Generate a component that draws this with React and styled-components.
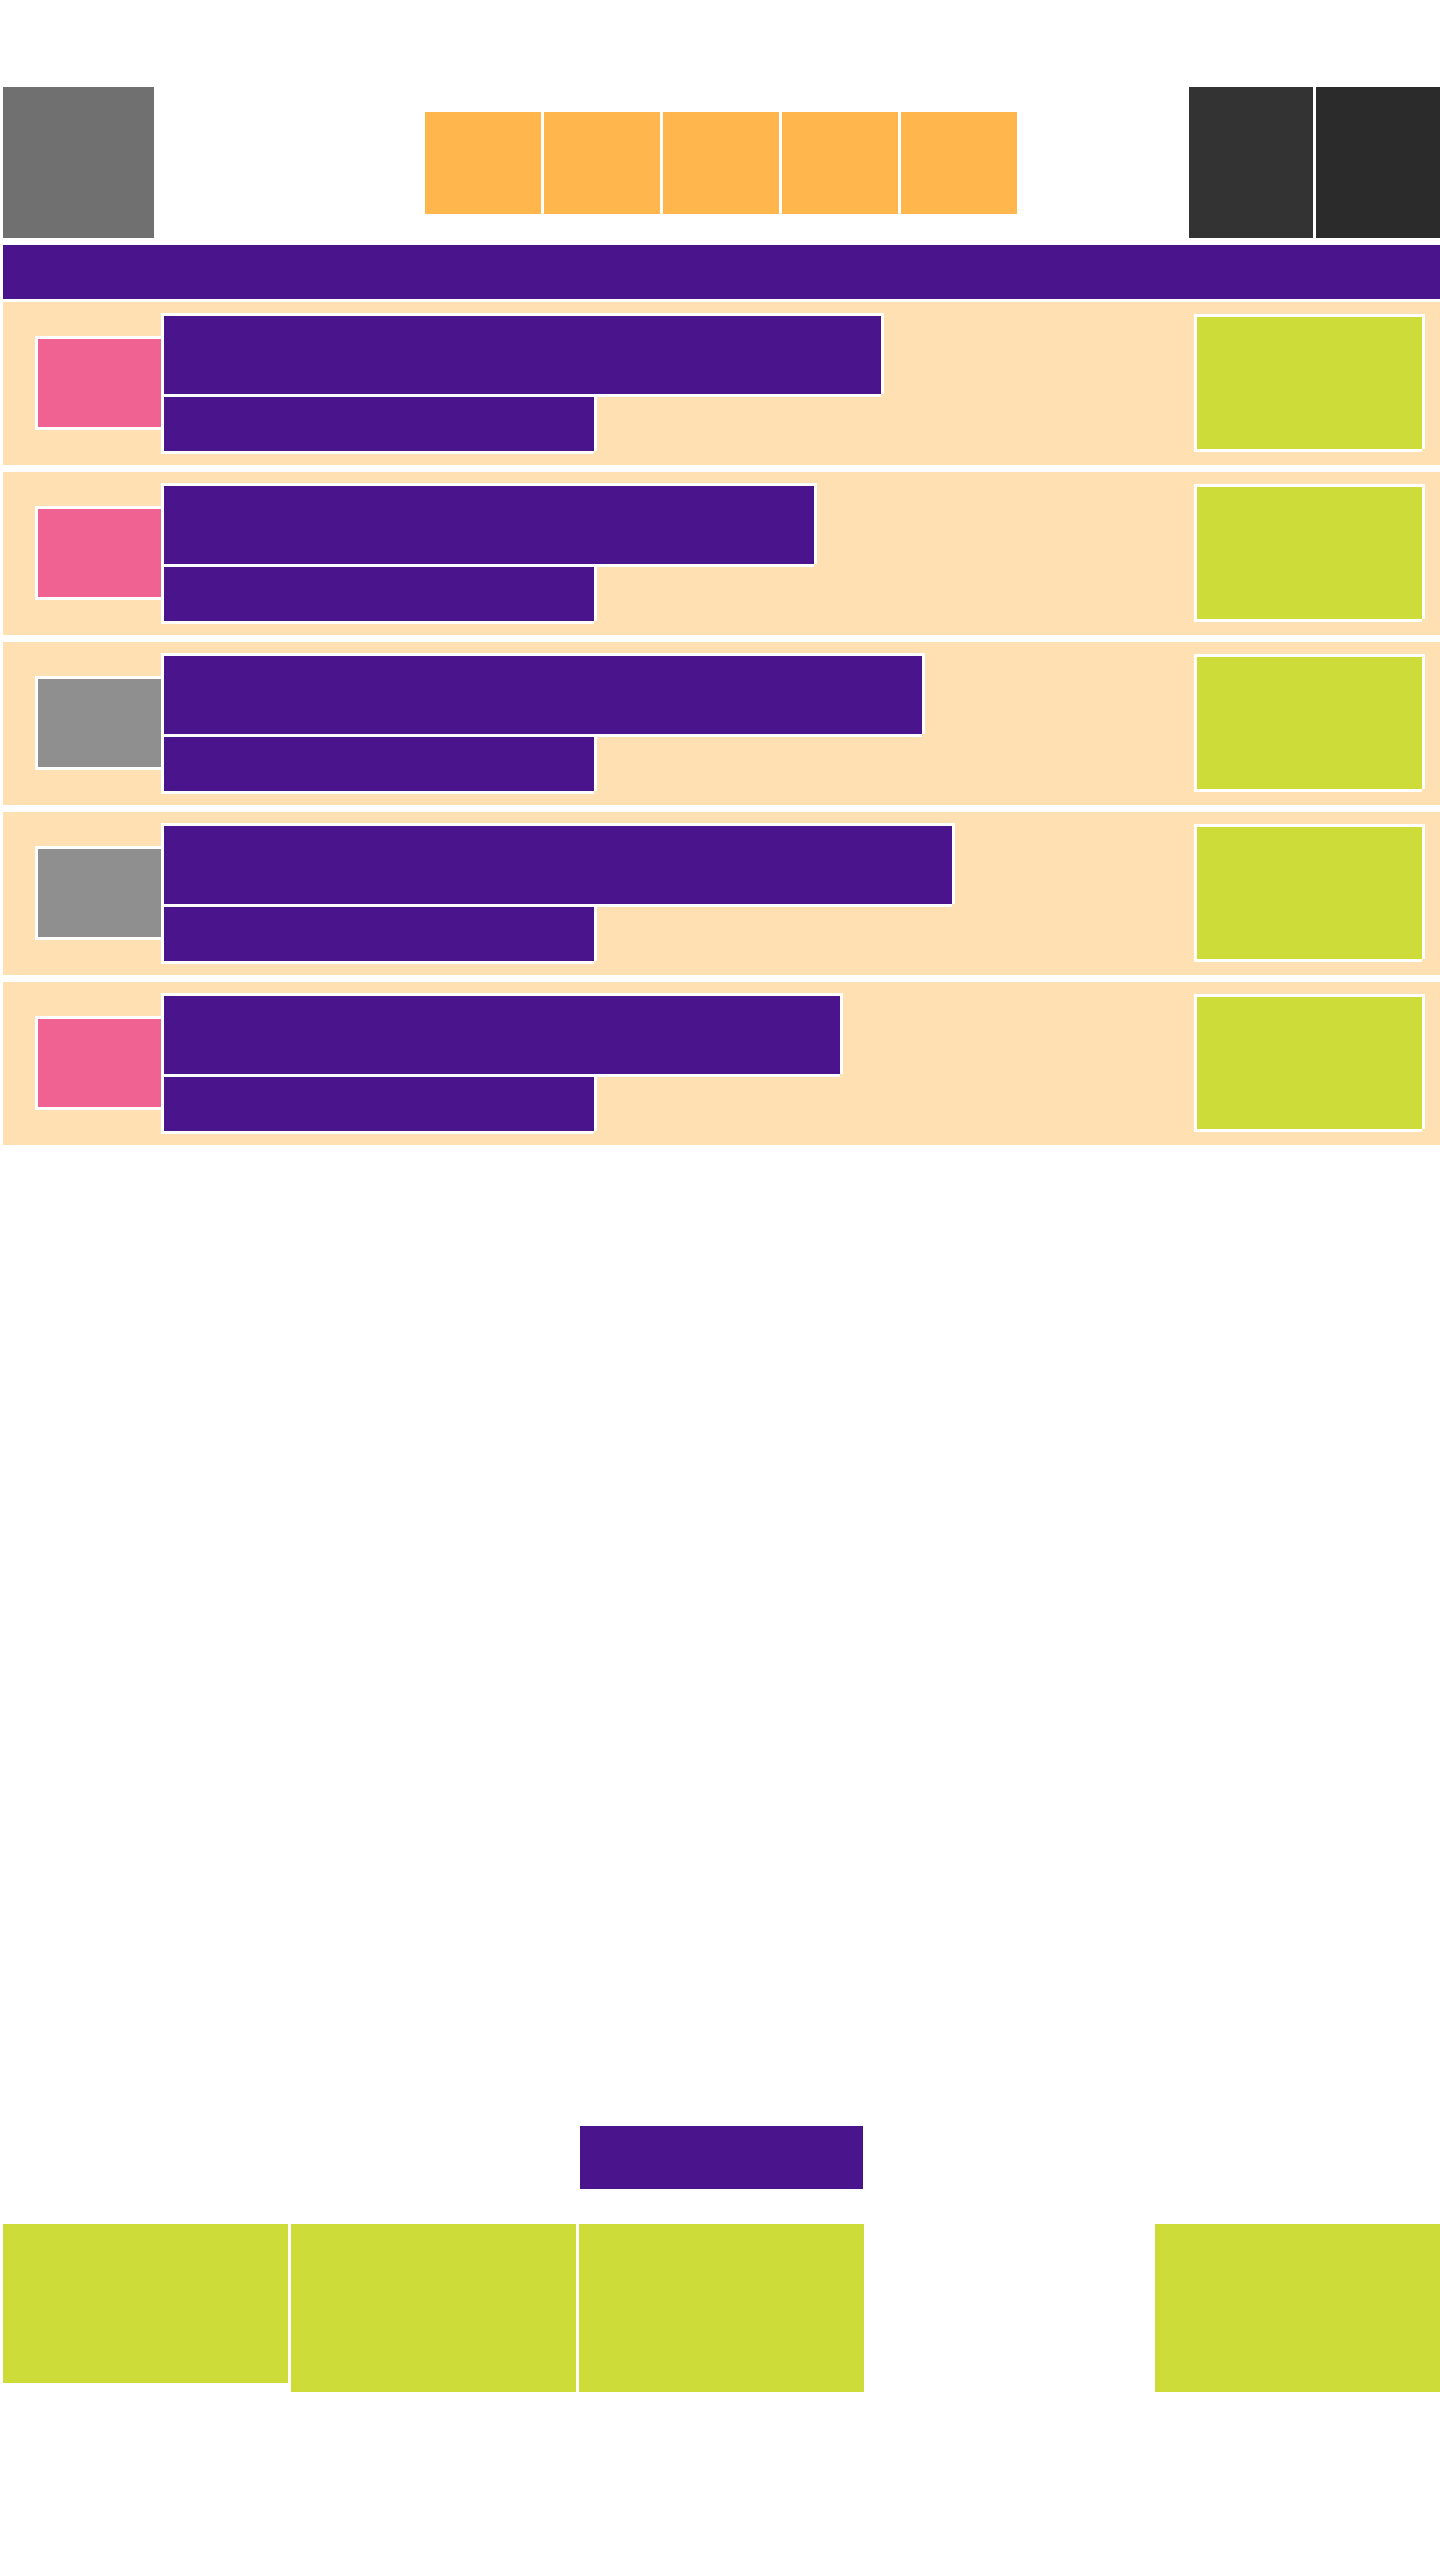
import React from "react";
import styled, { createGlobalStyle } from "styled-components";

const Global = createGlobalStyle`
  html, body {
    margin: 0;
    padding: 0;
    background: #ffffff;
    font-family: "Liberation Sans", Arial, sans-serif;
  }
`;

const PURPLE = "#4a148c";
const PEACH = "#ffe0b2";
const ORANGE = "#ffb74d";
const PINK = "#f06292";
const LIME = "#cddc39";
const GRAY = "#8f8f8f";

const Page = styled.div`
  width: 1440px;
  box-sizing: border-box;
  padding: 87px 0 0 3px;
`;

const Header = styled.header`
  display: grid;
  grid-template-columns: 422px auto 1fr;
  align-items: center;
  height: 151px;
`;

const Logo = styled.div`
  width: 151px;
  height: 151px;
  background: #707070;
`;

const Nav = styled.nav`
  display: flex;
  gap: 3px;
`;

const NavItem = styled.div`
  width: 116px;
  height: 102px;
  background: ${ORANGE};
`;

const Actions = styled.div`
  justify-self: end;
  display: flex;
  gap: 3px;
`;

const ActionButton = styled.div`
  width: 124px;
  height: 151px;
  background: ${(p) => p.$tone};
`;

const NavBar = styled.div`
  margin-top: 7px;
  height: 54px;
  background: ${PURPLE};
`;

const List = styled.section`
  margin-top: 3px;
  display: flex;
  flex-direction: column;
  gap: 7px;
`;

const Row = styled.article`
  display: flex;
  align-items: center;
  height: 163px;
  box-sizing: border-box;
  padding: 0 15px 0 32px;
  background: ${PEACH};
`;

const framed = `
  box-sizing: border-box;
  border-top: 3px solid #fff;
  border-left: 3px solid #fff;
  box-shadow: 3px 0 0 #fff, 0 3px 0 #fff;
`;

const Thumb = styled.div`
  ${framed}
  flex-shrink: 0;
  width: 126px;
  height: 91px;
  margin-bottom: 4px;
  background: ${(p) => p.$tone};
`;

const TitleBlock = styled.div`
  position: relative;
  display: flex;
  flex-direction: column;
  flex-shrink: 0;
  margin-bottom: 3px;
`;

const Bar = styled.div`
  ${framed}
  width: ${(p) => p.$w}px;
  height: ${(p) => p.$h}px;
  background: ${PURPLE};
`;

const Badge = styled.div`
  ${framed}
  flex-shrink: 0;
  margin-left: auto;
  margin-right: 3px;
  margin-bottom: 4px;
  width: 228px;
  height: 135px;
  background: ${LIME};
`;

const Footer = styled.footer`
  margin-top: 981px;
  display: flex;
  flex-direction: column;
  align-items: center;
`;

const CtaButton = styled.div`
  width: 283px;
  height: 63px;
  background: ${PURPLE};
`;

const Cards = styled.div`
  align-self: stretch;
  margin-top: 35px;
  display: grid;
  grid-template-columns: repeat(5, 285px);
  gap: 3px;
  align-items: start;
`;

const Card = styled.div`
  height: ${(p) => p.$h}px;
  grid-column: ${(p) => p.$col};
  background: ${LIME};
`;

const rows = [
  { tone: PINK, w: 720 },
  { tone: PINK, w: 653 },
  { tone: GRAY, w: 761 },
  { tone: GRAY, w: 791 },
  { tone: PINK, w: 679 },
];

const cards = [
  { col: 1, h: 159 },
  { col: 2, h: 168 },
  { col: 3, h: 168 },
  { col: 5, h: 168 },
];

export default function App() {
  return (
    <>
      <Global />
      <Page>
        <Header>
          <Logo />
          <Nav>
            {[0, 1, 2, 3, 4].map((i) => (
              <NavItem key={i} />
            ))}
          </Nav>
          <Actions>
            <ActionButton $tone="#333333" />
            <ActionButton $tone="#2b2b2b" />
          </Actions>
        </Header>
        <NavBar />
        <List>
          {rows.map((r, i) => (
            <Row key={i}>
              <Thumb $tone={r.tone} />
              <TitleBlock>
                <Bar $w={r.w} $h={81} />
                <Bar $w={433} $h={57} />
              </TitleBlock>
              <Badge />
            </Row>
          ))}
        </List>
        <Footer>
          <CtaButton />
          <Cards>
            {cards.map((c, i) => (
              <Card key={i} $col={c.col} $h={c.h} />
            ))}
          </Cards>
        </Footer>
      </Page>
    </>
  );
}
